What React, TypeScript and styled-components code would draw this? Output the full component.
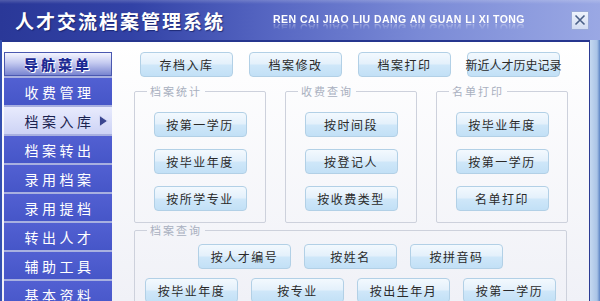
import React from 'react';
import styled, { createGlobalStyle } from 'styled-components';

const Global = createGlobalStyle`
  html, body { margin: 0; padding: 0; width: 600px; height: 301px; overflow: hidden; }
  body { font-family: "Noto Sans CJK SC", "Noto Sans", sans-serif; }
  #root { width: 600px; height: 301px; }
`;

const Window = styled.div`
  width: 600px;
  height: 301px;
  display: flex;
  flex-direction: column;
  overflow: hidden;
  background: #3a52b4;
`;

const TitleBar = styled.div`
  height: 40px;
  flex: none;
  display: flex;
  align-items: center;
  padding-left: 15px;
  background:
    linear-gradient(to bottom, rgba(255,255,255,0.18) 0, rgba(255,255,255,0) 4px),
    linear-gradient(to right, #2a3898 0%, #3242a6 22%, #5666c2 45%, #7a8ad6 70%, #9aa8e4 100%);
`;

const Title = styled.div`
  color: #ffffff;
  font-size: 19px;
  font-weight: 700;
  letter-spacing: 2px;
  text-shadow: 1px 1px 1px rgba(10, 20, 80, 0.6);
  white-space: nowrap;
`;

const Pinyin = styled.div`
  margin-left: 48px;
  margin-top: -2px;
  color: #ffffff;
  font-family: "Liberation Sans", Arial, sans-serif;
  font-size: 10.5px;
  font-weight: 700;
  letter-spacing: 0.45px;
  white-space: nowrap;
  -webkit-box-reflect: below -3px linear-gradient(transparent 35%, rgba(255,255,255,0.45));
`;

const CloseBox = styled.div`
  margin-left: auto;
  margin-right: 11px;
  width: 16px;
  height: 17px;
  display: flex;
  align-items: center;
  justify-content: center;
  background: linear-gradient(#eef3fc, #d2dcf2);
  border: 1px solid #9aaad8;
`;

const Body = styled.div`
  flex: 1;
  display: flex;
  min-height: 0;
`;

const LeftFrame = styled.div`
  width: 2px;
  flex: none;
  background: #3450b0;
`;

const Inner = styled.div`
  flex: 1;
  display: flex;
  align-items: flex-start;
  border-top: 2px solid #26368f;
  border-right: 1px solid #2c3c94;
  background: linear-gradient(#ffffff, #f0f1f7);
  min-width: 0;
`;

const RightFrame = styled.div`
  width: 10px;
  flex: none;
  background: linear-gradient(to right, #c4d8f0, #aac4e6 70%, #5c84c4);
`;

const Nav = styled.nav`
  width: 108px;
  margin-left: 2px;
  margin-top: 10px;
  display: flex;
  flex-direction: column;
  gap: 2px;
  background: #a8b0e0;
  flex: none;
`;

const NavHeader = styled.div`
  height: 22px;
  display: flex;
  align-items: center;
  justify-content: center;
  border: 1px solid #4a58b0;
  background: linear-gradient(#f4f5ff, #c4caf0 45%, #7884d0);
  color: #1c2a94;
  font-size: 14px;
  font-weight: 900;
  letter-spacing: 3px;
  text-shadow: 0 0 1px #fff, 0 0 2px #fff, 1px 1px 0 #fff;
`;

const NavItem = styled.div<{ $active?: boolean }>`
  position: relative;
  height: 27px;
  display: flex;
  align-items: center;
  justify-content: center;
  padding-left: 3px;
  font-size: 14px;
  letter-spacing: 3.5px;
  color: ${p => (p.$active ? '#1a2250' : '#ffffff')};
  background: ${p =>
    p.$active
      ? 'linear-gradient(#e8ebfd, #cdd3f5)'
      : 'linear-gradient(#5260d2, #4656c8)'};
`;

const Arrow = styled.svg`
  position: absolute;
  right: 4px;
  top: 8px;
`;

const Main = styled.div`
  flex: 1;
  display: flex;
  flex-direction: column;
  padding-top: 10px;
  padding-left: 22px;
  min-width: 0;
`;

const TopRow = styled.div`
  display: flex;
  gap: 16px;
  margin-left: 6px;
`;

const Btn = styled.div<{ $tight?: boolean }>`
  width: 93px;
  height: 25px;
  box-sizing: border-box;
  display: flex;
  align-items: center;
  justify-content: center;
  flex: none;
  border: 1px solid #b2d0e6;
  border-radius: 4px;
  background: linear-gradient(#f3f9fe 0%, #e3f0fb 48%, #cfe7f9 52%, #c2e0f6 100%);
  color: #2a2a2a;
  font-size: 12px;
  letter-spacing: ${p => (p.$tight ? '0' : '1.5px')};
  white-space: nowrap;
`;

const GroupRow = styled.div`
  display: grid;
  grid-template-columns: 132px 132px 132px;
  column-gap: 19px;
  margin-top: 8px;
`;

const Group = styled.fieldset`
  margin: 0;
  padding: 15px 0 11px;
  border: 1px solid #cdd1dc;
  border-radius: 2px;
  min-width: 0;
  display: flex;
  flex-direction: column;
  align-items: center;
  gap: 12px;
`;

const Legend = styled.legend`
  margin-left: 12px;
  padding: 0 3px;
  font-size: 11px;
  line-height: 12px;
  letter-spacing: 2px;
  color: #a9b0c0;
`;

const QueryGroup = styled.fieldset`
  margin: 1px 0 0;
  width: 433px;
  box-sizing: border-box;
  padding: 8px 0 10px;
  border: 1px solid #cdd1dc;
  border-radius: 2px;
  min-width: 0;
  display: flex;
  flex-direction: column;
  align-items: center;
  gap: 9px;
`;

const QueryRow = styled.div`
  display: flex;
  gap: 13px;
`;

const navItems = ['收费管理', '档案入库', '档案转出', '录用档案', '录用提档', '转出人才', '辅助工具', '基本资料'];

const groups = [
  { title: '档案统计', items: ['按第一学历', '按毕业年度', '按所学专业'] },
  { title: '收费查询', items: ['按时间段', '按登记人', '按收费类型'] },
  { title: '名单打印', items: ['按毕业年度', '按第一学历', '名单打印'] },
];

export default function App() {
  return (
    <Window>
      <Global />
      <TitleBar>
        <Title>人才交流档案管理系统</Title>
        <Pinyin>REN CAI JIAO LIU DANG AN GUAN LI XI TONG</Pinyin>
        <CloseBox>
          <svg width="12" height="12" viewBox="0 0 12 12">
            <path d="M1.5 1.5 L10.5 10.5 M10.5 1.5 L1.5 10.5" stroke="#4a6088" strokeWidth="1.6" fill="none" />
          </svg>
        </CloseBox>
      </TitleBar>
      <Body>
        <LeftFrame />
        <Inner>
          <Nav>
            <NavHeader>导航菜单</NavHeader>
            {navItems.map(n => (
              <NavItem key={n} $active={n === '档案入库'}>
                {n}
                {n === '档案入库' && (
                  <Arrow width="9" height="12" viewBox="0 0 9 12">
                    <path d="M0.5 0.5 L8.5 6 L0.5 11.5 Z" fill="#3a4690" stroke="#dfe3fb" strokeWidth="0.8" />
                  </Arrow>
                )}
              </NavItem>
            ))}
          </Nav>
          <Main>
            <TopRow>
              <Btn>存档入库</Btn>
              <Btn>档案修改</Btn>
              <Btn>档案打印</Btn>
              <Btn $tight>新近人才历史记录</Btn>
            </TopRow>
            <GroupRow>
              {groups.map(g => (
                <Group key={g.title}>
                  <Legend>{g.title}</Legend>
                  {g.items.map(i => (
                    <Btn key={i}>{i}</Btn>
                  ))}
                </Group>
              ))}
            </GroupRow>
            <QueryGroup>
              <Legend>档案查询</Legend>
              <QueryRow>
                <Btn>按人才编号</Btn>
                <Btn>按姓名</Btn>
                <Btn>按拼音码</Btn>
              </QueryRow>
              <QueryRow>
                <Btn>按毕业年度</Btn>
                <Btn>按专业</Btn>
                <Btn>按出生年月</Btn>
                <Btn>按第一学历</Btn>
              </QueryRow>
            </QueryGroup>
          </Main>
        </Inner>
        <RightFrame />
      </Body>
    </Window>
  );
}
